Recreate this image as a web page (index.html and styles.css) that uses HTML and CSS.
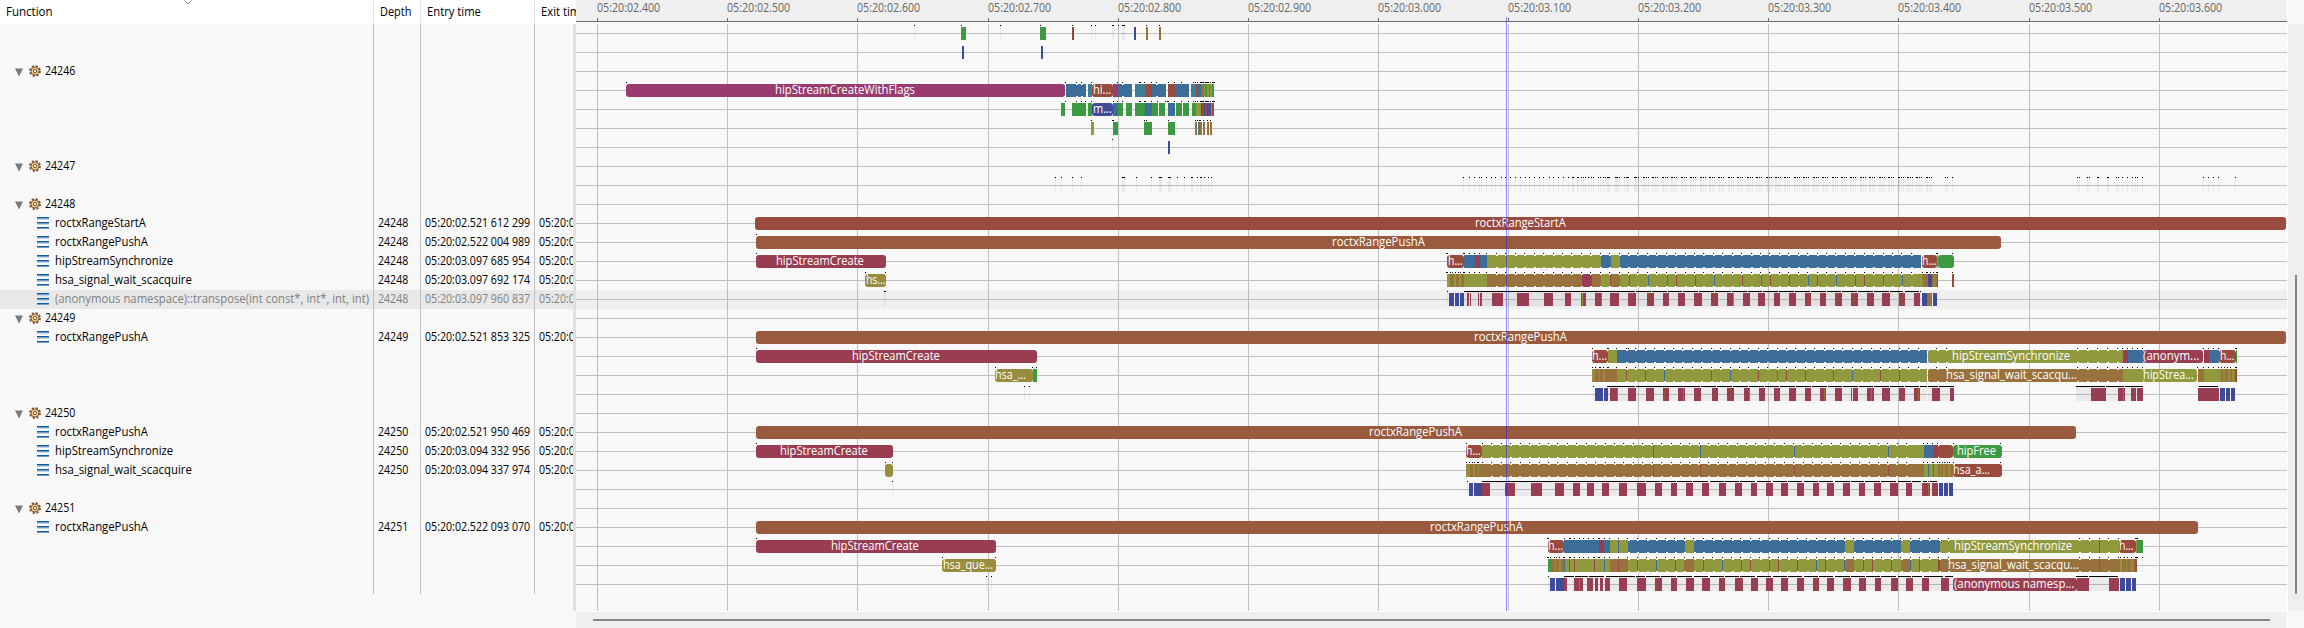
FILE: index.html
```html
<!DOCTYPE html>
<html lang="en">
<head>
<meta charset="utf-8">
<title>Call stack view</title>
<link rel="stylesheet" href="styles.css">
</head>
<body>
<svg class="defs" width="0" height="0">
  <symbol id="gear" viewBox="0 0 12 12">
    <circle cx="6" cy="6" r="5" fill="none" stroke="#7a5233" stroke-width="1.8" stroke-dasharray="2.2 1.727"/>
    <circle cx="6" cy="6" r="4" fill="#f7cf85" stroke="#85603c" stroke-width="1"/>
    <circle cx="6" cy="6" r="1.7" fill="#fff3da" stroke="#7a5233" stroke-width="1"/>
  </symbol>
  <symbol id="stack" viewBox="0 0 12 12">
    <path d="M0 0h12v1H0zM0 5h12v1H0zM0 10h12v1H0z" fill="#0f5ca0"/>
    <path d="M0 1h12v1H0zM0 6h12v1H0zM0 11h12v1H0z" fill="#6f9dc6"/>
    <path d="M0 2h12v1H0zM0 7h12v1H0z" fill="#c4d7e8"/>
  </symbol>
  <symbol id="twist" viewBox="0 0 8 8">
    <path d="M0 0.5h8v1H7v2H6v2H5v2H3v-2H2v-2H1v-2H0z" fill="#7b7b7b"/>
  </symbol>
</svg>
<main class="view">
  <section class="tree">
    <header class="tree-head">
      <svg class="sort" viewBox="0 0 8 5"><path d="M.5 .5L4 4L7.5 .5" fill="none" stroke="#888"/></svg>
      <div class="col fn"><span class="fit" data-w="47">Function</span></div>
      <div class="col depth"><span class="fit" data-w="31.5">Depth</span></div>
      <div class="col entry"><span class="fit" data-w="54">Entry time</span></div>
      <div class="col exit"><span class="fit" data-w="46">Exit time</span></div>
    </header>
    <div class="tree-body" id="tree"></div>
  </section>
  <section class="chart">
    <header class="scale" id="scale"></header>
    <div class="plot">
      <div class="grid" id="grid"></div>
      <div class="rows" id="rows"></div>
    </div>
    <div class="cursor"></div>
    <footer class="hscroll"><div class="hthumb"></div></footer>
  </section>
  <aside class="vscroll"><div class="vtrack"><div class="vthumb"></div></div></aside>
</main>
<script src="app.js"></script>
</body>
</html>
```

FILE: styles.css
```css
body {
  margin: 0;
  background: #f8f8f8;
  font-family: "Open Sans", "Noto Sans", sans-serif;
  font-size: 12.5px;
  color: #000;
  overflow: hidden;
}
.defs { position: absolute; }
.view { display: grid; grid-template-columns: 576px 1711px 17px; height: 628px; }
.fit { display: inline-block; white-space: pre; transform-origin: 0 50%; }

/* tree */
.tree { display: flex; flex-direction: column; overflow: hidden; }
.tree-head, .trow { display: grid; grid-template-columns: 374px 47px 114px 1fr; }
.tree-head { height: 24px; background: #fff; position: relative; }
.tree-head .col { line-height: 23px; padding-left: 6px; overflow: hidden; white-space: nowrap; }
.tree-head .fn, .tree-head .depth, .tree-head .entry { border-right: 1px solid #e2e2e2; }
.sort { position: absolute; left: 183.5px; top: 0; width: 8px; height: 5px; }
.tree-body { width: 573px; height: 587px; border-right: 3px solid #e0e0e0; }
.trow { height: 19px; line-height: 17px; }
.trow > div { overflow: hidden; white-space: nowrap; }
.trow .fn, .trow .depth, .trow .entry { border-right: 1px solid #c0c0c0; }
.trow .fn { display: flex; align-items: flex-start; }
.trow .depth, .trow .entry { padding-left: 4px; }
.trow .exit { padding-left: 4px; }
.trow.sel { background: #e8e8e8; color: #808080; }
.twist { width: 8px; height: 8px; margin: 6px 6px 0 15px; }
.gear { width: 12px; height: 12px; margin: 3px 4px 0 0; }
.stack { width: 12px; height: 12px; margin: 3px 6px 0 37px; flex: none; }

/* chart */
.chart { display: flex; flex-direction: column; position: relative; border-right: 1px solid #fff; width: 1711px; }
.scale { height: 21px; background: #efefef; border-bottom: 1px solid #6b6b6b; position: relative; }
.tick { position: absolute; top: 0; height: 21px; color: #666; line-height: 15px; }
.tick::after { content: ""; position: absolute; left: 0; bottom: 0; width: 1px; height: 3px; background: #6b6b6b; }
.plot { height: 589px; position: relative; overflow: hidden; border-bottom: 1px solid #fff; }
.grid i { position: absolute; top: 2px; bottom: 0; width: 1px; background: #c0c0c0; }
.rows { padding-top: 2px; }
.row { height: 19px; position: relative; }
.row::before { content: ""; position: absolute; left: 0; right: 0; top: 9px; height: 1px; background: #c0c0c0; }
.row.sel { background: rgba(0, 0, 0, .035); }
.row b { position: absolute; top: 3px; height: 13px; }
.row .round { border-radius: 3px; }
.row .dot { top: 1px; height: 1px; background: #000; }
.row .shade { background: rgba(0, 0, 0, .055); height: 14px; top: 2px; }
.row .notch { top: 3px; height: 11px; width: 2px; border: solid #f8f8f8; border-width: 1px 0; }
.label { position: absolute; top: 0; line-height: 17px; color: #fff; }
.purple { background: #993b70; }
.crimson { background: #993d52; }
.blue { background: #3d6e99; }
.teal { background: #3d7f99; }
.olive { background: #90993d; }
.brown { background: #99713d; }
.rust { background: #994b3d; }
.sienna { background: #995a3d; }
.indigo { background: #3d4b99; }
.green { background: #3d9942; }
.gold { background: #998c3d; }
.cursor { position: absolute; left: 930px; top: 17px; width: 1px; height: 594px; background: rgba(30, 30, 255, .5); }
.hscroll { height: 16px; background: #efefef; padding-top: 7px; box-sizing: border-box; }
.hthumb { height: 2px; margin-left: 17px; width: 1677px; background: #858585; }
.vscroll { padding-top: 24px; }
.vtrack { height: 587px; margin-left: 1px; background: #efefef; padding-top: 251px; box-sizing: border-box; }
.vthumb { width: 2px; height: 319px; margin-left: 7px; background: #858585; }
```

FILE: app.js
```js
const LEFT = 576;
const COLORS = { p: 'purple', c: 'crimson', b: 'blue', t: 'teal', o: 'olive', n: 'brown', r: 'rust', s: 'sienna', i: 'indigo', g: 'green', y: 'gold' };

// Tree entries by row index
const tree = {
  2: ['24246'], 7: ['24247'], 9: ['24248'], 15: ['24249'], 20: ['24250'], 25: ['24251'],
  10: ['roctxRangeStartA', 90.5, '24248', '05:20:02.521 612 299'],
  11: ['roctxRangePushA', 92.5, '24248', '05:20:02.522 004 989'],
  12: ['hipStreamSynchronize', 118, '24248', '05:20:03.097 685 954'],
  13: ['hsa_signal_wait_scacquire', 136.5, '24248', '05:20:03.097 692 174'],
  14: ['(anonymous namespace)::transpose(int const*, int*, int, int)', 314.5, '24248', '05:20:03.097 960 837'],
  16: ['roctxRangePushA', 92.5, '24249', '05:20:02.521 853 325'],
  21: ['roctxRangePushA', 92.5, '24250', '05:20:02.521 950 469'],
  22: ['hipStreamSynchronize', 118, '24250', '05:20:03.094 332 956'],
  23: ['hsa_signal_wait_scacquire', 136.5, '24250', '05:20:03.094 337 974'],
  26: ['roctxRangePushA', 92.5, '24251', '05:20:02.522 093 070']
};

const SELECTED = 14;
const ROWS = 30;

function steps(a, b, s) {
  const out = [];
  for (let x = a; x <= b + 0.01; x += s) out.push(Math.round(x));
  return out.join(' ');
}

function clusters() {
  const out = [];
  for (let x = 1643; x < 1934; x += 9.43) {
    const r = Math.round(x);
    out.push(`${r}-${r + 2}`, `${r + 3}-${r + 4}`);
    if (Math.round(x * 7) % 3) out.push(`${r + 5}`);
  }
  return out.join(' ');
}

function transfers(s) {
  return s.split(' ').map(t => { const [x, w] = t.split('/').map(Number); return `c${x}-${x + w}`; }).join(' ');
}

const pulse8 = '1055 1061 1072 1081 1122-1125 1136 1151 1159-1162 1168-1171 1177 1184 1191-1193 1197 1200-1202 1204 1208 1211 ' +
  '1463 1469 1474 1479 1481 1486 1491 1495 1501 1505 1510 1515 1520 1525 1529 1534 1539 1543 1549 1553 1558 1563 1568 1572-1574 1577-1579 ' +
  '1581 1583 1585 1588 1591 1593 1598 1600 1603 1605 1607-1610 1615-1618 1619 1624 1626-1629 1634-1637 1638 ' + clusters() +
  ' 1945 1947 1952 2077 2079 2087 2089 2097-2099 2107-2109 2116 2118 2122 2127 2132 2135 2137 2142 2203 2208 2213 2218 2235';

// seg: bars, shade: sub-pixel activity, dots: event markers, notch: boundaries inside bars, text: [x, width, label]
const rows = {
  0: { seg: 'g961-966 g1040-1046 r1072 i1073 i1134-1136 n1146-1148 n1159-1161', shade: '914 1000 1091 1095 1112-1114 1122-1125',
       dots: '914 961 1000 1040 1072 1091 1095 1112-1114 1118 1122-1125 1146 1159' },
  1: { seg: 'i962-964 i1041-1043' },
  3: { seg: 'p@626-1065 b1066-1086 t1088-1092 r@1092-1113 p1113-1118 b1118-1132 t1135-1145 r1145-1152 b1152-1166 r1168-1175 b1175-1189 t1191-1196 r1196-1198 b1198-1201 g1201-1214 o1204 o1207-1209 o1210-1212 n1202',
       dots: '626 1065 1076 1081 1091 1117 1122 1139-1141 1144 1151 1156 1168 1174 1181 1193 1195 1197 1200-1204 1205-1209 1210 1212-1215',
       notch: '1076 1081 1122 1156', text: [[774.5, 140, 'hipStreamCreateWithFlags'], [1092.5, 18.5, 'hi...']] },
  4: { seg: 'g1061-1065 g1072-1086 g1088-1092 i@1092-1113 b1113-1118 g1118-1123 g1126-1132 g1135-1145 p1145 b1146-1152 g1152-1158 g1159-1165 b1168-1175 g1176-1182 g1183-1189 g1192-1196 o1196-1201 i1201-1214 r1202-1204 r1205-1207 r1209-1210 o1211 r1212-1214',
       dots: '1065 1076 1081 1085 1091 1113 1117 1122 1139-1141 1144-1146 1151 1157 1165 1167-1169 1174 1181 1188 1193 1195 1197 1200-1204 1205-1209 1210 1212-1215',
       text: [[1092.5, 18.5, 'm...']] },
  5: { seg: 'o1091-1094 g1113-1118 g1144-1152 g1168-1175 n1195-1197 t1198-1200 n1200-1202 n1203-1205 n1207-1209 n1210-1212', dots: '1091 1112-1114 1144 1146 1168 1195 1197 1199-1201 1203 1207 1210' },
  6: { seg: 'i1168-1170', shade: '1112', dots: '1112' },
  8: { shade: pulse8, dots: pulse8 },
  10: { seg: 'r@755-2286', text: [[1474.7, 90.5, 'roctxRangeStartA']] },
  11: { seg: 's@756-2001', dots: '756', text: [[1332, 92.5, 'roctxRangePushA']] },
  12: { seg: 'c@756-886 r@1447-1464 b1464-1475 c1475-1480 b1480-1487 o1487-1601 b1601-1611 o1611-1620 b1620-1921 r@1922-1937 o1937 g@1938-1954',
        dots: '756 1446-1448 1463-1465 1469 1474 1479 1486 ' + steps(1496, 1920, 9.43) + ' 1936-1938 1952',
        notch: steps(1496, 1915, 9.43), text: [[775.7, 88, 'hipStreamCreate'], [1447.5, 15, 'h...'], [1922, 15, 'h...']] },
  13: { seg: 'y@865-886 o1447-1487 n1450-1454 n1456-1459 n1461-1464 n1487-1582 c1582-1592 n1592-1601 o1601-1611 r1610 n1611-1620 o1620-1922 b1629 b1648 b1667 r1676 b1695 b1714 r1742 b1761 r1770 b1789 b1808 r1817 b1836 b1855 r1864 b1883 b1902 n1923-1928 y1922 i1928-1932 n1932-1937 y1934 r1937 r1952-1954',
        dots: '865 885 1446-1448 1450 1452 1455 1458 1460 1463-1465 1469 1474 1479 1486 ' + steps(1496, 1920, 9.43) + ' 1922 1926-1928 1930 1933 1936-1938 1952',
        notch: steps(1496, 1915, 9.43), text: [[866, 19, 'hs...']] },
  14: { shade: '884-886 1447 1464-1921', dots: '884-886 1447 1464-1635 1636-1651 1652-1667 1668-1682 1683-1698 1699-1714 1715-1731 1732-1747 1748-1762 1763-1778 1779-1794 1795-1810 1811-1826 1827-1841 1842-1857 1858-1873 1874-1889 1890-1903 1905-1919 1920',
        seg: 'i1449-1454 i1455-1459 i1460-1464 ' + transfers('1467/2 1470/1 1478/1 1480/2 1492/11 1517/12 1544/9 1565/6 1581/5 1595/7 1610/9 1628/8 1647/7 1663/6 1678/7 1694/8 1711/7 1727/7 1743/7 1758/7 1774/6 1789/7 1805/6 1820/6 1835/7 1851/7 1867/7 1882/8 1899/6 1914/6') + ' o1582 n1601 r1629 r1648 r1667 r1695 r1714 o1733 r1761 r1789 r1808 r1836 r1854 r1902 i1922-1927 n1927-1932 i1933-1937' },
  16: { seg: 's@756-2286', text: [[1473.7, 92.5, 'roctxRangePushA']] },
  17: { seg: 'c@756-1037 r@1592-1608 o1608-1617 b1617-1927 o1928-2123 c2123-2128 b2128-2143 c@2143-2203 c2204-2209 b2209-2219 r@2219-2236 g2236',
        dots: '756 1592 1607-1609 1616 1628 ' + steps(1626, 1927, 9.41) + ' 1936 1946 2077 2087 2097 2107 2117 2122 2127 2132 2137 2142 2203 2208 2213 2218 2235-2237',
        notch: steps(1626, 1946, 9.41) + ' 2077 2087 2097 2107 2117', text: [[851.7, 88, 'hipStreamCreate'], [1592, 15.5, 'h...'], [1951.7, 118, 'hipStreamSynchronize'], [2143.3, 56, '(anonym...'], [2219.5, 15, 'h...']] },
  18: { seg: 'y@995-1033 g1033-1037 y1592-1608 n1595-1599 n1600-1603 n1605-1617 o1617-1927 r1626 r1645 b1664 b1711 b1730 r1758 b1777 r1786 r1805 r1833 b1852 r1880 r1899 n1928-2123 o2123-2143 o@2143-2197 n2198-2204 o2204-2219 y2219-2235 n2221-2223 n2225-2228 n2230-2232 r2235-2237',
        dots: '995 1032 1036 1592 1595 1599-1601 1603 1607-1609 1616 ' + steps(1626, 1927, 9.41) + ' 1936 1946 2077 2087 2097 2107 2117 2122 2127 2132 2137 2142 2197 2203 2208 2213 2218 2221 2224 2227 2230 2235-2237',
        notch: steps(1626, 1946, 9.41) + ' 2077 2087 2097 2107 2117', text: [[995.3, 31, 'hsa_...'], [1946, 131, 'hsa_signal_wait_scacqu...'], [2143.3, 51, 'hipStrea...']] },
  19: { shade: '1024 1029 1593 1608-1927 1928-1954 2076-2143', dots: '1024 1029 1593 1607-1635 1636-1700 1701-1716 1717-1732 1733-1748 1749-1764 1765-1779 1780-1795 1796-1811 1812-1827 1828-1842 1843-1858 1859-1873 1874-1889 1890-1904 1905-1919 1920-1927 1928-1938 1939-1954 2076-2105 2106-2124 2125-2143 2199-2218',
        seg: 'i1595-1603 i1604-1608 ' + transfers('1610/8 1628/8 1646/8 1663/6 1678/7 1694/7 1712/6 1727/7 1744/6 1759/6 1774/6 1789/7 1805/6 1820/6 1835/7 1851/1 1853/5 1867/7 1882/8 1899/6 1914/6 1932/8 1950/4 2091/15 2118/7 2131/5 2137/6 2198/21') + ' n1617 r1664 n1683 r1730 n1749 r1777 n1824 n1871 n1918 n2123 i2220-2225 i2226-2230 i2231-2235' },
  21: { seg: 's@756-2076', text: [[1368.7, 92.5, 'roctxRangePushA']] },
  22: { seg: 'c@756-893 r@1466-1482 o1482-1924 b1653 b1700 b1794 b1888 b1924-1933 c1933-1938 r@1938-1953 g@1953-2002',
        dots: '756 1466 ' + steps(1482, 1914, 9.43) + ' 1923 1927 1932 1937 1953 2000', notch: steps(1491, 1914, 9.43),
        text: [[779.7, 88, 'hipStreamCreate'], [1466, 15, 'h...'], [1956.7, 39, 'hipFree']] },
  23: { seg: 'y@885-893 y1466-1482 n1470-1473 n1475-1478 n1479-1924 r1653 r1700 r1794 r1888 o1924-1938 b1928 b1933 n1938-1953 y1940 y1943-1945 y1948-1950 r@1953-2002',
        dots: '885 892 1466 1469 1472 1474 1477-1479 ' + steps(1482, 1914, 9.43) + ' 1923 1927 1932-1934 1937 1939 1942 1944 1947 1949 1953 2000', notch: steps(1491, 1914, 9.43),
        text: [[1953.3, 37, 'hsa_a...']] },
  24: { shade: '892 1467 1482-1937', dots: '892 1467 1482-1645 1646-1660 1661-1676 1677-1692 1693-1708 1710-1724 1725-1739 1740-1755 1757-1771 1773-1787 1788-1802 1804-1818 1819-1833 1835-1850 1851-1864 1865-1880 1881-1896 1898-1911 1912-1921 1923-1927 1928 1930-1937',
        seg: 'i1469-1473 i1474-1482 ' + transfers('1482/8 1505/10 1531/11 1555/9 1573/7 1587/7 1602/7 1619/8 1637/9 1655/7 1671/6 1686/7 1702/7 1719/7 1735/7 1751/6 1766/7 1781/7 1797/7 1813/6 1827/7 1843/7 1859/6 1874/7 1890/8 1906/6 1922/8 1932/6') + ' n1928 r1923 i1939-1943 i1944-1948 i1949-1953' },
  26: { seg: 's@756-2198', text: [[1429.5, 92.5, 'roctxRangePushA']] },
  27: { seg: 'c@756-996 r@1548-1564 b1564-1599 c1599-1604 b1604-1610 o1610-1628 b1618 b1628-1685 o1685-1694 b1694-1845 o1845-1854 b1854-1901 o1901-1910 b1910-1940 o1940-2119 b2099 r@2119-2136 o2136 g2137-2143',
        dots: '756 1547-1549 1564 1569-1571 1574 1579 1583 1588 1593 1598-1600 1604 1609 ' + steps(1618, 1938, 9.41) + ' 1948 2079 2089 2099 2108 2118 2135-2138', notch: steps(1628, 1948, 9.41) + ' 2079 2089 2108',
        text: [[830.7, 88, 'hipStreamCreate'], [1548, 15.5, 'h...'], [1953.7, 118, 'hipStreamSynchronize'], [2119.3, 15, 'h...']] },
  28: { seg: 'y@942-996 g1548-1551 n1551-1564 y1555 y1559-1561 b1564 o1565-1610 b1569 r1574 c1594 b1604 n1610-1628 r1618 o1628-1684 n1684-1694 o1694-1845 n1845-1854 o1854-1901 n1901-1910 o1910-1938 r1938-1940 n1940-2119 b1637 b1656 b1675 b1703 b1722 b1741 r1750 b1769 r1778 r1797 b1816 r1825 b1844 b1863 r1872 b1891 b1910 r1919 r2099 o2120-2122 n2119 n2122-2135 y2126 y2131-2133 r2135-2137',
        shade: '2142', dots: '942 995 1547-1549 1550 1554 1556 1559 1563 1564 1569-1571 1574 1579 1583 1588 1593-1595 1598-1600 1604 1609 ' + steps(1618, 1938, 9.41) + ' 1948 2079 2089 2099 2108 2118 2120 2124 2127 2131 2135-2138 2142', notch: steps(1628, 1948, 9.41) + ' 2079 2089 2108',
        text: [[942.7, 50, 'hsa_que...'], [1948, 131, 'hsa_signal_wait_scacqu...']] },
  29: { shade: '986 991 1548 1564-1953 2089-2109', dots: '986 991 1548 1564-1574 1575-1588 1589-1604 1606-1635 1636-1645 1646-1660 1661-1676 1677-1692 1694-1708 1710-1724 1725-1739 1740-1755 1757-1771 1773-1787 1788-1802 1804-1818 1819-1833 1835-1850 1851-1865 1866-1880 1881-1896 1898-1911 1912-1922 1924-1943 1945-1953 2076-2088 2089-2118',
        seg: 'i1550-1555 i1556-1564 ' + transfers('1564/3 1574/9 1587/6 1595/3 1600/3 1605/5 1619/8 1637/9 1655/7 1671/6 1686/8 1702/8 1719/6 1735/8 1751/7 1766/7 1781/7 1797/7 1813/6 1827/7 1843/8 1859/7 1875/6 1891/7 1906/7 1922/7 1941/8') + ' r1565 n1579 r1588 r1609 r1637 r1656 r1675 r1703 r1722 r1741 r1769 r1816 r1844 r1863 r1891 r1910 c@1953-2077 c2077-2089 c2109-2119 i2120-2125 i2126-2131 i2132-2136',
        text: [[1953.5, 120, '(anonymous namesp...']] }
};

function el(tag, cls, parent) {
  const e = document.createElement(tag);
  if (cls) e.className = cls;
  if (parent) parent.appendChild(e);
  return e;
}

function span(parent, text, width, cls) {
  const s = el('span', 'fit' + (cls ? ' ' + cls : ''), parent);
  s.textContent = text;
  s.dataset.w = width;
  return s;
}

function icon(name) {
  return `<svg class="${name}"><use href="#${name}"/></svg>`;
}

function mark(row, cls, range, fixed) {
  const [a, b] = range.split('-').map(Number);
  const m = el('b', cls, row);
  m.style.left = a - LEFT + 'px';
  if (!fixed) m.style.width = (b ? b - a : 1) + 'px';
}

const treeEl = document.getElementById('tree');
const rowsEl = document.getElementById('rows');

for (let k = 0; k < ROWS; k++) {
  const sel = k === SELECTED ? ' sel' : '';
  const tr = el('div', 'trow' + sel, treeEl);
  const fn = el('div', 'fn', tr), depth = el('div', 'depth', tr), entry = el('div', 'entry', tr), exit = el('div', 'exit', tr);
  const t = tree[k];
  if (t && t.length === 1) {
    fn.innerHTML = icon('twist') + icon('gear');
    span(fn, t[0], 30.5);
  } else if (t) {
    fn.innerHTML = icon('stack');
    span(fn, t[0], t[1]);
    span(depth, t[2], 30.5);
    span(entry, t[3], 105.5);
    span(exit, '05:20:0', 35.5);
  }

  const row = el('div', 'row' + sel, rowsEl);
  const d = rows[k];
  if (!d) continue;
  if (d.shade) d.shade.split(' ').forEach(r => mark(row, 'shade', r));
  if (d.seg) d.seg.split(' ').forEach(s => {
    const round = s[1] === '@';
    mark(row, COLORS[s[0]] + (round ? ' round' : ''), s.slice(round ? 2 : 1));
  });
  if (d.notch) d.notch.split(' ').filter(Boolean).forEach(r => mark(row, 'notch', r, true));
  if (d.dots) d.dots.split(' ').forEach(r => mark(row, 'dot', r));
  (d.text || []).forEach(([x, w, label]) => { span(row, label, w, 'label').style.left = x - LEFT + 'px'; });
}

const ticks = [597, 727, 857, 988, 1118, 1248, 1378, 1508, 1638, 1768, 1898, 2029, 2159];
ticks.forEach((x, i) => {
  const n = 2400 + i * 100;
  const t = el('div', 'tick', document.getElementById('scale'));
  t.style.left = x - LEFT + 'px';
  span(t, `05:20:0${Math.floor(n / 1000)}.${String(n % 1000).padStart(3, '0')}`, 63);
  el('i', '', document.getElementById('grid')).style.left = x - LEFT + 'px';
});

document.querySelectorAll('.fit').forEach(s => {
  s.style.transform = `scaleX(${s.dataset.w / s.offsetWidth})`;
});
```
